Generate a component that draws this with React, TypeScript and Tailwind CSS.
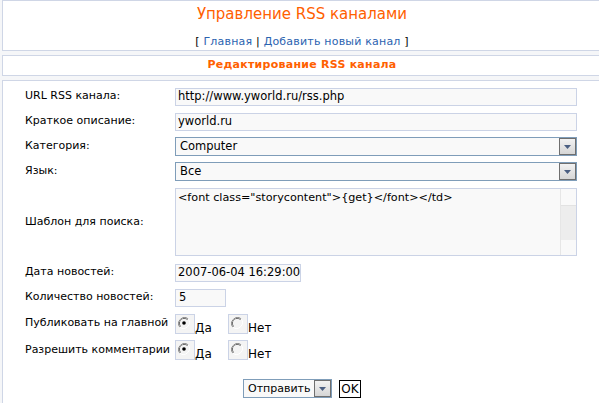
import React from "react";

const font = { fontFamily: '"DejaVu Sans", Verdana, sans-serif' };

function Arrow() {
  return (
    <div className="flex h-[17px] w-[17px] shrink-0 items-center justify-center border border-[#6f6f6f] bg-gradient-to-b from-[#f2f2f2] to-[#d6d6d6]">
      <svg width="7" height="4" viewBox="0 0 7 4">
        <polygon points="0,0 7,0 3.5,4" fill="#4b5f82" />
      </svg>
    </div>
  );
}

function Select({ value, width, text = "text-[11.5px]" }: { value: string; width: string; text?: string }) {
  return (
    <div className={`flex h-[19px] items-center justify-between border border-[#7f9db9] bg-[#f9f9f9] pl-[4px] ${width}`}>
      <span className={`whitespace-nowrap leading-none text-black ${text}`}>{value}</span>
      <Arrow />
    </div>
  );
}

function Radio({ checked }: { checked: boolean }) {
  return (
    <div className="flex h-[20px] w-[20px] shrink-0 items-start justify-start border border-[#cbd3e6] bg-[#f4f4f4] pl-[2px] pt-[2px]">
      <svg width="12" height="12" viewBox="0 0 12 12">
        <path d="M10.2 1.8 A6 6 0 0 0 1.8 10.2" stroke="#8a8a8a" strokeWidth="1" fill="none" />
        <path d="M9.5 2.5 A5 5 0 0 0 2.5 9.5" stroke="#5a5a5a" strokeWidth="1" fill="none" />
        <path d="M1.8 10.2 A6 6 0 0 0 10.2 1.8" stroke="#ffffff" strokeWidth="1" fill="none" />
        <circle cx="6" cy="6" r="4" fill="#f4f4f4" />
        {checked && <circle cx="6" cy="6" r="1.8" fill="#000" />}
      </svg>
    </div>
  );
}

function Row({ label, children, h = "h-[25px]" }: { label: string; children: React.ReactNode; h?: string }) {
  return (
    <div className={`flex items-center ${h}`}>
      <div className="w-[150px] shrink-0 whitespace-nowrap text-[11px] text-black">{label}</div>
      {children}
    </div>
  );
}

function RadioPair() {
  return (
    <div className="flex items-end">
      <Radio checked />
      <span className="mb-[-3px] w-[33px] text-[12px] text-black">Да</span>
      <Radio checked={false} />
      <span className="mb-[-3px] text-[12px] text-black">Нет</span>
    </div>
  );
}

const inputCls =
  "flex h-[18px] items-center whitespace-nowrap border border-[#cbd3e6] bg-[#f9f9f9] pl-[2px] text-[11.5px] text-black";

export default function App() {
  return (
    <div className="h-[403px] w-[599px] overflow-hidden bg-[#f5f6f8] pl-[2px]" style={font}>
      <div className="flex h-[51px] w-[620px] flex-col items-center border border-r-0 border-[#cfd6e6] bg-white pr-[21px]">
        <div className="mt-[3px] text-[15px] leading-[20px] text-[#ff6000]">Управление RSS каналами</div>
        <div className="mt-[11px] text-[11px] leading-[14px] tracking-[0.2px] text-black">
          [ <a className="text-[#2b63b0]">Главная</a> | <a className="text-[#2b63b0]">Добавить новый канал</a> ]
        </div>
      </div>
      <div className="mt-[4px] flex h-[21px] w-[620px] items-center justify-center border border-r-0 border-[#cfd6e6] bg-white pr-[21px]">
        <span className="text-[11px] font-bold tracking-[0.25px] text-[#ff6000]">Редактирование RSS канала</span>
      </div>
      <div className="mt-[4px] h-[400px] w-[620px] border border-r-0 border-[#cfd6e6] bg-white pl-[22px] pt-[3px]">
        <Row label="URL RSS канала:">
          <div className={`${inputCls} w-[402px]`}>http://www.yworld.ru/rss.php</div>
        </Row>
        <Row label="Краткое описание:">
          <div className={`${inputCls} w-[402px]`}>yworld.ru</div>
        </Row>
        <Row label="Категория:">
          <Select value="Computer" width="w-[402px]" />
        </Row>
        <Row label="Язык:">
          <Select value="Все" width="w-[402px]" />
        </Row>
        <Row label="Шаблон для поиска:" h="h-[76px]">
          <div className="flex h-[68px] w-[402px] border border-[#cbd3e6] bg-[#f9f9f9]">
            <div className="flex-1 whitespace-nowrap pl-[2px] pt-[2px] text-[11.2px] leading-[14px] text-black">&lt;font class="storycontent"&gt;{"{get}"}&lt;/font&gt;&lt;/td&gt;</div>
            <div className="flex w-[16px] flex-col border-l border-[#e6e6e6] bg-[#f9f9f9]">
              <div className="h-[17px] border-b border-[#e2e2e2]" />
              <div className="h-[34px] bg-[#ededed]" />
              <div className="flex-1" />
            </div>
          </div>
        </Row>
        <Row label="Дата новостей:">
          <div className={`${inputCls} w-[126px]`}>2007-06-04 16:29:00</div>
        </Row>
        <Row label="Количество новостей:">
          <div className={`${inputCls} w-[51px] pl-[3px]`}>5</div>
        </Row>
        <Row label="Публиковать на главной" h="h-[27px]">
          <RadioPair />
        </Row>
        <Row label="Разрешить комментарии" h="h-[26px]">
          <RadioPair />
        </Row>
        <div className="mt-[16px] flex w-[576px] items-center justify-center gap-[7px] pr-[22px]">
          <Select value="Отправить" width="w-[89px]" text="text-[11px]" />
          <button className="flex h-[18px] w-[22px] items-center justify-center border border-black bg-white text-[12px] leading-none text-black">OK</button>
        </div>
      </div>
    </div>
  );
}
